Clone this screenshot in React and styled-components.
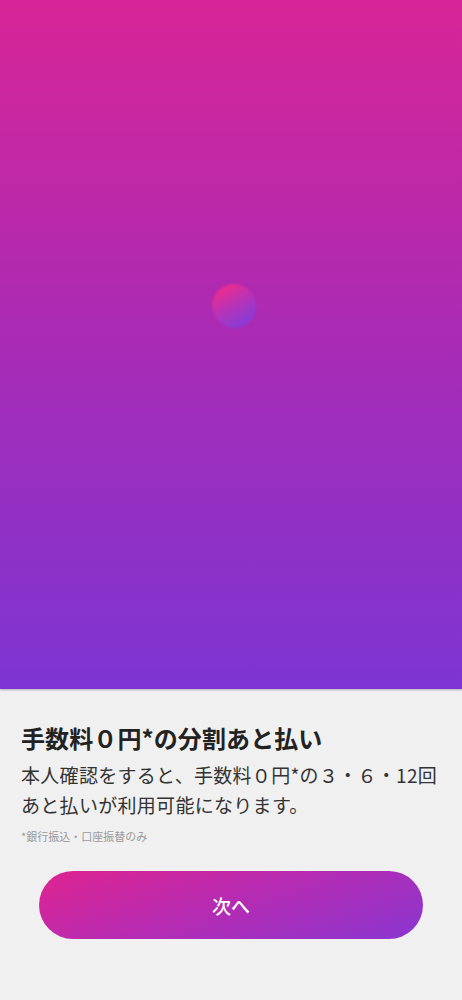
import React from 'react';
import styled, { createGlobalStyle } from 'styled-components';

const GlobalStyle = createGlobalStyle`
    html, body {
        margin: 0;
        padding: 0;
        background: #f0f0f0;
        font-family: "Noto Sans CJK JP", "Noto Sans", sans-serif;
    }
`;

const Screen = styled.div`
    width: 462px;
    height: 1000px;
    display: flex;
    flex-direction: column;
    background: #f0f0f0;
    overflow: hidden;
`;

const Hero = styled.div`
    height: 689px;
    flex-shrink: 0;
    display: flex;
    justify-content: center;
    align-items: flex-start;
    padding-top: 284px;
    box-sizing: border-box;
    background: linear-gradient(180deg, #d82597 0%, #a82bb5 50%, #7d35d3 100%);
    box-shadow: 0 1px 2px rgba(60, 20, 90, 0.35);
`;

const Orb = styled.div`
    width: 44px;
    height: 44px;
    border-radius: 50%;
    margin-left: 6px;
    background: linear-gradient(150deg, #f02c8a 10%, #b534b8 50%, #7a3fe0 95%);
    filter: blur(1.2px);
`;

const Panel = styled.div`
    flex: 1;
    padding: 32px 21px 0;
    display: flex;
    flex-direction: column;
`;

const Title = styled.h1`
    margin: 0;
    font-size: 24px;
    line-height: 34px;
    font-weight: 700;
    color: #222;
    letter-spacing: 0.1px;
`;

const Body = styled.p`
    margin: 5px -12px 0 0;
    font-size: 19px;
    line-height: 30px;
    font-weight: 400;
    color: #333;
    letter-spacing: 0.3px;
`;

const Note = styled.p`
    margin: 8px 0 0;
    font-size: 11px;
    line-height: 16px;
    color: #9a9a9a;
`;

const NextButton = styled.button`
    align-self: center;
    margin-top: 27px;
    width: 384px;
    height: 68px;
    border: none;
    border-radius: 34px;
    background: linear-gradient(160deg, #de2490 0%, #b82bb0 45%, #8a36d0 100%);
    color: #fff;
    font-family: inherit;
    font-size: 19px;
    font-weight: 500;
    cursor: pointer;
`;

const App = () => {
    return (
        <React.Fragment>
            <GlobalStyle />
            <Screen>
                <Hero>
                    <Orb />
                </Hero>
                <Panel>
                    <Title>手数料０円*の分割あと払い</Title>
                    <Body>本人確認をすると、手数料０円*の３・６・12回あと払いが利用可能になります。</Body>
                    <Note>*銀行振込・口座振替のみ</Note>
                    <NextButton>次へ</NextButton>
                </Panel>
            </Screen>
        </React.Fragment>
    );
};

export default App;
